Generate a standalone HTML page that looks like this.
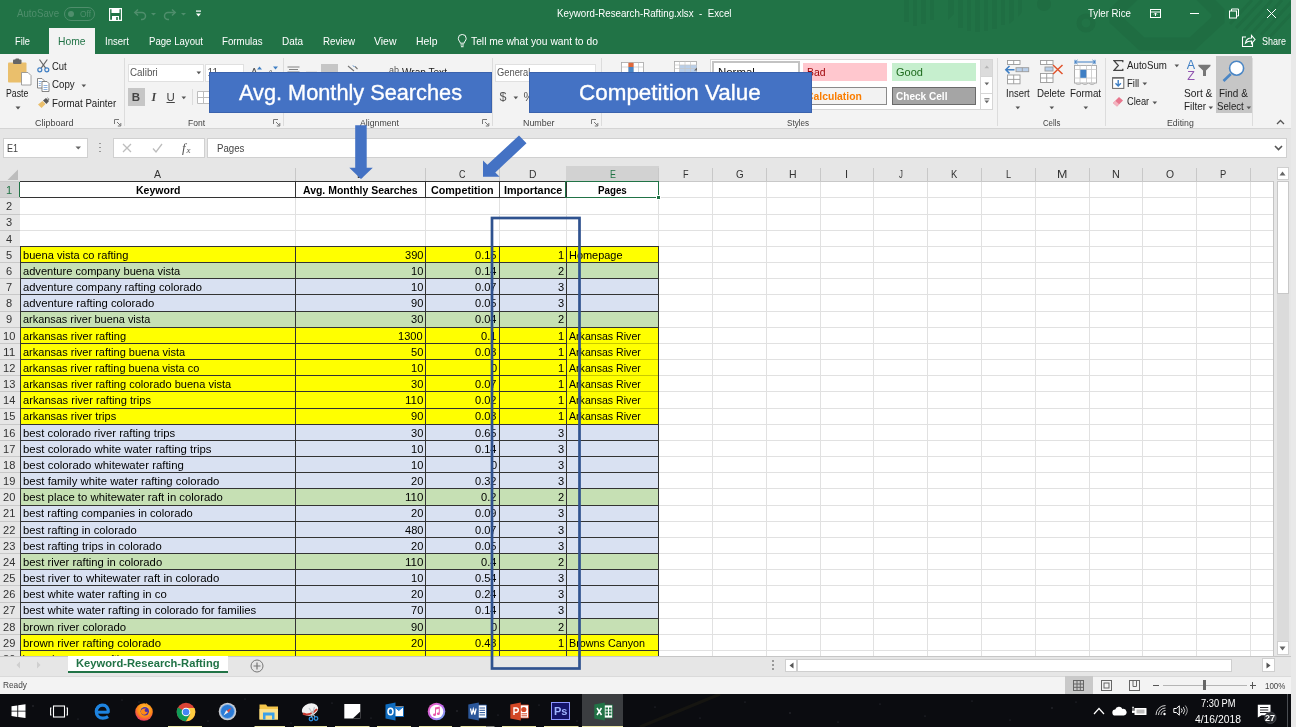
<!DOCTYPE html>
<html><head><meta charset="utf-8"><title>Excel</title>
<style>
*{box-sizing:border-box;margin:0;padding:0}
html,body{width:1296px;height:727px;overflow:hidden;background:#e9e9e9}
body{font-family:"Liberation Sans",sans-serif;font-size:11px;color:#222;position:relative}
#app div,#app span,#app svg{position:absolute}
#app{position:absolute;left:0;top:0;width:1291px;height:727px;background:#e6e6e6;filter:blur(0.4px)}
.t{white-space:nowrap;line-height:1}
</style></head><body><div id="app">

<div style="left:-6px;top:-6px;width:1297px;height:60px;background:#217346"></div>
<svg style="left:880px;top:0" width="411" height="54" viewBox="0 0 411 54">
<g fill="#1f6d42">
<path d="M24 0h5v22h-5zM33 0h4v26h-4zM41 0h5v24h-5zM50 0h4v20h-4zM68 0h6v14l-6 6zM78 0h5v28h-5zM87 0h4v31h-4zM95 0h5v32h-5zM104 0h4v31h-4zM112 0h5v29h-5zM121 0h4v25h-4zM129 0h5v20l-5 4zM138 0h4v12l-4 5z" opacity=".8"/>
<circle cx="164" cy="4" r="7"/>
</g>
<circle cx="206" cy="23" r="7" fill="none" stroke="#1f6d42" stroke-width="5"/>
<path d="M262 -14h50l26 26v8l-26 24h-50l-26-24v-8z" fill="none" stroke="#1f6d42" stroke-width="13" stroke-linejoin="miter"/>
<g stroke="#1f6d42" stroke-width="3" opacity=".9"><path d="M372 0l-22 24M382 0l-26 28M392 0l-28 31M402 0l-30 33M411 2l-30 33M411 14l-22 24"/></g>
</svg>
<div class="t" style="left:17px;top:9px;font-size:10.2px;color:#4f8e6c;transform:scaleX(0.9518);transform-origin:0 50%;">AutoSave</div>
<div style="left:64px;top:6.5px;width:31px;height:14px;border:1.3px solid #4f8e6c;border-radius:7px"></div>
<div style="left:68px;top:10.5px;width:6px;height:6px;border-radius:3px;background:#4f8e6c"></div>
<div class="t" style="left:79.6px;top:9px;font-size:9.6px;color:#4f8e6c;transform:scaleX(0.8711);transform-origin:0 50%;">Off</div>
<svg style="left:109px;top:8px" width="13" height="13" viewBox="0 0 13 13"><path d="M0.5 0.5h12v12h-12z" fill="none" stroke="#fff" stroke-width="1.3"/><rect x="2.5" y="1" width="8" height="4" fill="#fff"/><rect x="3" y="8" width="7" height="4.5" fill="#fff"/><rect x="7.2" y="9" width="1.6" height="3" fill="#217346"/></svg>
<svg style="left:133px;top:8px" width="60" height="13" viewBox="0 0 60 13"><g fill="none" stroke="#4f8e6c" stroke-width="1.5"><path d="M2 4.5h7a3.5 3.5 0 0 1 0 7h-1"/><path d="M5 1.5l-3.2 3 3.2 3"/><path d="M42 4.500h-7a3.5 3.5 0 0 0 0 7h1"/><path d="M39 1.500l3.200 3-3.200 3"/></g><path d="M18 5h5l-2.500 2.500z" fill="#4f8e6c"/><path d="M48 5h5l-2.500 2.500z" fill="#4f8e6c"/></svg>
<svg style="left:195px;top:10px" width="7" height="8" viewBox="0 0 7 8"><rect x="1" y="0.500" width="5" height="1.200" fill="#fff"/><path d="M1 3.500h5l-2.500 3z" fill="#fff"/></svg>
<div class="t" style="left:556.7px;top:9px;font-size:10.2px;color:#fff;transform:scaleX(0.9571);transform-origin:0 50%;">Keyword-Research-Rafting.xlsx &nbsp;-&nbsp; Excel</div>
<div class="t" style="left:1088px;top:9px;font-size:10.2px;color:#fff;transform:scaleX(0.9483);transform-origin:0 50%;">Tyler Rice</div>
<svg style="left:1150px;top:7px" width="130" height="14" viewBox="0 0 130 14"><g fill="none" stroke="#fff" stroke-width="1">
<rect x="0.500" y="2.500" width="10" height="8"/><path d="M0.500 5h10"/><path d="M5.500 9V6M4 7.500l1.500-1.500 1.500 1.500"/>
<path d="M40 6.500h9"/>
<rect x="79.500" y="4" width="7" height="7" /><path d="M81.500 4V2h7v7h-2"/>
<path d="M117 2l9 9M126 2l-9 9"/></g></svg>
<div style="left:49px;top:28px;width:46px;height:27px;background:#f3f3f3"></div>
<div class="t" style="left:15px;top:37px;font-size:10.2px;color:#fff;transform:scaleX(0.9126);transform-origin:0 50%;">File</div>
<div class="t" style="left:58.1px;top:37px;font-size:10.2px;color:#217346;transform:scaleX(1.0107);transform-origin:0 50%;">Home</div>
<div class="t" style="left:105.2px;top:37px;font-size:10.2px;color:#fff;transform:scaleX(0.9408);transform-origin:0 50%;">Insert</div>
<div class="t" style="left:148.7px;top:37px;font-size:10.2px;color:#fff;transform:scaleX(0.9445);transform-origin:0 50%;">Page Layout</div>
<div class="t" style="left:222.3px;top:37px;font-size:10.2px;color:#fff;transform:scaleX(0.9551);transform-origin:0 50%;">Formulas</div>
<div class="t" style="left:282.4px;top:37px;font-size:10.2px;color:#fff;transform:scaleX(0.9793);transform-origin:0 50%;">Data</div>
<div class="t" style="left:323px;top:37px;font-size:10.2px;color:#fff;transform:scaleX(0.9568);transform-origin:0 50%;">Review</div>
<div class="t" style="left:374px;top:37px;font-size:10.2px;color:#fff;transform:scaleX(1.0263);transform-origin:0 50%;">View</div>
<div class="t" style="left:415.5px;top:37px;font-size:10.2px;color:#fff;transform:scaleX(1.0249);transform-origin:0 50%;">Help</div>
<div class="t" style="left:471px;top:37px;font-size:10.2px;color:#fff;transform:scaleX(1.0090);transform-origin:0 50%;">Tell me what you want to do</div>
<div class="t" style="left:1262px;top:37px;font-size:10.2px;color:#fff;transform:scaleX(0.8818);transform-origin:0 50%;">Share</div>
<svg style="left:456.500px;top:33.500px" width="10.500" height="14" viewBox="0 0 12 16"><g fill="none" stroke="#fff" stroke-width="1.100"><path d="M3.800 10.500C3.800 8.500 1.500 7.800 1.500 5A4.500 4.500 0 0 1 10.500 5C10.500 7.800 8.200 8.500 8.200 10.500z"/><path d="M4 12.500h4M4.500 14.500h3"/></g></svg>
<svg style="left:1241px;top:33px" width="15" height="15" viewBox="0 0 15 15"><g fill="none" stroke="#fff" stroke-width="1.100"><path d="M5 4H1.500v9.500h10V10"/><path d="M4.500 10c.5-3 2.500-5 6-5V2.500l3.500 4-3.500 4V8c-2.500 0-4.500.5-6 2z"/></g></svg>
<div style="left:-6px;top:54px;width:1297px;height:75px;background:#f3f3f3;border-bottom:1px solid #d4d4d4"></div>
<div style="left:124px;top:58px;width:1px;height:68px;background:#dcdcdc"></div>
<div style="left:282.5px;top:58px;width:1px;height:68px;background:#dcdcdc"></div>
<div style="left:492px;top:58px;width:1px;height:68px;background:#dcdcdc"></div>
<div style="left:601px;top:58px;width:1px;height:68px;background:#dcdcdc"></div>
<div style="left:997px;top:58px;width:1px;height:68px;background:#dcdcdc"></div>
<div style="left:1104.5px;top:58px;width:1px;height:68px;background:#dcdcdc"></div>
<div style="left:1252px;top:58px;width:1px;height:68px;background:#dcdcdc"></div>
<div class="t" style="left:34.5px;top:118px;font-size:9.6px;color:#444;transform:scaleX(0.9369);transform-origin:0 50%;">Clipboard</div>
<div class="t" style="left:187.8px;top:118px;font-size:9.6px;color:#444;transform:scaleX(0.8850);transform-origin:0 50%;">Font</div>
<div class="t" style="left:360.4px;top:118px;font-size:9.6px;color:#444;transform:scaleX(0.9112);transform-origin:0 50%;">Alignment</div>
<div class="t" style="left:522.8px;top:118px;font-size:9.6px;color:#444;transform:scaleX(0.9255);transform-origin:0 50%;">Number</div>
<div class="t" style="left:787px;top:118px;font-size:9.6px;color:#444;transform:scaleX(0.8415);transform-origin:0 50%;">Styles</div>
<div class="t" style="left:1043px;top:118px;font-size:9.6px;color:#444;transform:scaleX(0.8108);transform-origin:0 50%;">Cells</div>
<div class="t" style="left:1167.3px;top:118px;font-size:9.6px;color:#444;transform:scaleX(0.9130);transform-origin:0 50%;">Editing</div>
<svg style="left:114px;top:119px" width="8" height="8" viewBox="0 0 8 8"><path d="M0.500 5V0.500H5" fill="none" stroke="#777" stroke-width="1"/><path d="M3 3l3.500 3.500M6.800 4v3H3.800" fill="none" stroke="#777" stroke-width="1"/></svg>
<svg style="left:272.5px;top:119px" width="8" height="8" viewBox="0 0 8 8"><path d="M0.500 5V0.500H5" fill="none" stroke="#777" stroke-width="1"/><path d="M3 3l3.500 3.500M6.800 4v3H3.800" fill="none" stroke="#777" stroke-width="1"/></svg>
<svg style="left:482px;top:119px" width="8" height="8" viewBox="0 0 8 8"><path d="M0.500 5V0.500H5" fill="none" stroke="#777" stroke-width="1"/><path d="M3 3l3.500 3.500M6.800 4v3H3.800" fill="none" stroke="#777" stroke-width="1"/></svg>
<svg style="left:591px;top:119px" width="8" height="8" viewBox="0 0 8 8"><path d="M0.500 5V0.500H5" fill="none" stroke="#777" stroke-width="1"/><path d="M3 3l3.500 3.500M6.800 4v3H3.800" fill="none" stroke="#777" stroke-width="1"/></svg>
<!-- Clipboard group -->
<svg style="left:5px;top:58px" width="30" height="30" viewBox="0 0 30 30">
<rect x="3" y="4.500" width="18.500" height="20" rx="1" fill="#eabf6c"/>
<rect x="8" y="1.500" width="8.500" height="4.500" rx="1" fill="#666"/><rect x="10.300" y="0.500" width="4" height="2.500" rx="1" fill="#666"/>
<path d="M16.500 14.500h6.500l3 3v9.500h-9.500z" fill="#fff" stroke="#8a8a8a" stroke-width="0.800"/>
</svg>
<div class="t rl" style="left:6.3px;top:89px;font-size:10.2px;transform:scaleX(0.8588);transform-origin:0 50%;">Paste</div>
<svg style="left:14.500px;top:106px" width="6" height="4" viewBox="0 0 6 4"><path d="M0.500 0.500h5l-2.500 3z" fill="#555"/></svg>
<!-- cut -->
<svg style="left:36.500px;top:59px" width="13" height="14" viewBox="0 0 13 14"><g fill="none" stroke-width="1.200"><path d="M2.500 0.500L8.800 9.300M10.300 0.500L4 9.300" stroke="#666"/><circle cx="2.800" cy="10.800" r="2" stroke="#3f7fc4"/><circle cx="9.800" cy="10.800" r="2" stroke="#3f7fc4"/></g></svg>
<div class="t rl" style="left:52px;top:62px;font-size:10.2px;transform:scaleX(0.9261);transform-origin:0 50%;">Cut</div>
<!-- copy -->
<svg style="left:36.500px;top:77.500px" width="13" height="14" viewBox="0 0 13 14"><g fill="#fff" stroke="#777" stroke-width="0.900"><path d="M0.500 0.500h4.500l2 2v7.500h-6.500z"/><path d="M5 3.500h5l2 2v8h-7z"/></g><path d="M1.800 3.500h3M1.800 5.500h2M1.800 7.500h2M6.500 7.500h4M6.500 9.500h4M6.500 11.500h4" stroke="#5b8fd0" stroke-width="0.700"/></svg>
<div class="t rl" style="left:52px;top:80px;font-size:10.2px;transform:scaleX(0.9533);transform-origin:0 50%;">Copy</div>
<svg style="left:81px;top:83.500px" width="6" height="4" viewBox="0 0 6 4"><path d="M0.500 0.500h4.600l-2.300 2.800z" fill="#555"/></svg>
<!-- format painter -->
<svg style="left:36.500px;top:96.500px" width="13" height="12" viewBox="0 0 13 12"><path d="M1 7.500L5.500 4l3 3L4.500 11z" fill="#eabf6c"/><path d="M6 3.500L9 1l3 3-2.500 3z" fill="#555"/><path d="M10.500 0.500l.5 1.200 1.200.5-1.200.5-.5 1.200" fill="none" stroke="#555" stroke-width="0.600"/></svg>
<div class="t rl" style="left:52px;top:99px;font-size:10.2px;transform:scaleX(0.9517);transform-origin:0 50%;">Format Painter</div>

<!-- Font group -->
<div style="left:127.500px;top:63.500px;width:76px;height:18px;background:#fff;border:1px solid #e0e0e0"></div>
<div class="t rl" style="left:129.7px;top:68px;font-size:10.2px;color:#555;transform:scaleX(0.9617);transform-origin:0 50%;">Calibri</div>
<svg style="left:195.500px;top:71px" width="6" height="4" viewBox="0 0 6 4"><path d="M0.500 0.500h4.600l-2.300 2.800z" fill="#555"/></svg>
<div style="left:204.700px;top:63.500px;width:39.500px;height:18px;background:#fff;border:1px solid #e0e0e0"></div>
<div class="t rl" style="left:207.500px;top:68px;font-size:10.2px;color:#555;">11</div>
<div class="t" style="left:250.500px;top:67px;font-size:11px;color:#555">A</div>
<svg style="left:257px;top:65.500px" width="5" height="4" viewBox="0 0 5 4"><path d="M0 3.500L2.500 0.500L5 3.500z" fill="#3f7fc4"/></svg>
<div class="t" style="left:267.500px;top:67.500px;font-size:9.500px;color:#555">A</div>
<svg style="left:273px;top:65.500px" width="5" height="4" viewBox="0 0 5 4"><path d="M0 0.500L2.500 3.500L5 0.500z" fill="#3f7fc4"/></svg>
<div style="left:127.500px;top:88.200px;width:17.200px;height:18px;background:#c6c6c6"></div>
<div class="t" style="left:131.800px;top:92px;font-size:11.500px;font-weight:bold;color:#444;">B</div>
<div class="t" style="left:151.500px;top:91px;font-size:12px;font-style:italic;font-family:'Liberation Serif',serif;font-weight:bold;color:#444;">I</div>
<div class="t" style="left:166.500px;top:92px;font-size:11.500px;color:#444;text-decoration:underline;">U</div>
<svg style="left:181px;top:95.500px" width="6" height="4" viewBox="0 0 6 4"><path d="M0.500 0.500h4.600l-2.300 2.800z" fill="#555"/></svg>
<div style="left:191.500px;top:89px;width:1px;height:16px;background:#dcdcdc"></div>
<svg style="left:197px;top:91px" width="13" height="13" viewBox="0 0 13 13"><path d="M0.500 0.500h12v12h-12zM6.500 0.500v12M0.500 6.500h12" fill="#fff" stroke="#bdbdbd" stroke-width="1"/></svg>

<!-- Alignment group (mostly hidden) -->
<svg style="left:287px;top:65.500px" width="32" height="8" viewBox="0 0 32 8"><path d="M0.500 1h12M2 3.500h9M0.500 6h12" stroke="#777" stroke-width="0.900"/><path d="M19 6.500h11" stroke="#aaa" stroke-width="1.500"/></svg>
<div style="left:320.800px;top:63.500px;width:17.200px;height:8px;background:#c6c6c6"></div>
<svg style="left:347px;top:65px" width="12" height="7" viewBox="0 0 12 7"><path d="M1 1l6 5M8 1.500l2.500 2.500" stroke="#777" stroke-width="1.100" fill="none"/><path d="M6 0.500l1.500 1.500" stroke="#3f7fc4" stroke-width="1"/></svg>
<div class="t" style="left:389px;top:66px;font-size:9px;color:#555">ab</div>
<div class="t rl" style="left:402px;top:68px;font-size:10.2px;transform:scaleX(0.9881);transform-origin:0 50%;">Wrap Text</div>

<!-- Number group -->
<div style="left:494.700px;top:63.500px;width:101.500px;height:18px;background:#fff;border:1px solid #e0e0e0"></div>
<div class="t rl" style="left:496.7px;top:68px;font-size:10.2px;color:#555;transform:scaleX(0.9177);transform-origin:0 50%;">General</div>
<div class="t" style="left:499.500px;top:91px;font-size:12.500px;color:#555;">$</div>
<svg style="left:513px;top:95.500px" width="6" height="4" viewBox="0 0 6 4"><path d="M0.500 0.500h4.600l-2.300 2.800z" fill="#555"/></svg>
<div class="t" style="left:523.500px;top:91px;font-size:12px;color:#555;">%</div>

<!-- Styles group -->
<svg style="left:621px;top:61.500px" width="24" height="10" viewBox="0 0 24 10"><rect x="0.500" y="0.500" width="22" height="10" fill="#fff" stroke="#a6a6a6" stroke-width="0.800"/><path d="M7.500 0.500v10M12.500 0.500v10M17.500 0.500v10M0.500 5h22" stroke="#c6c6c6" stroke-width="0.700"/><rect x="7.500" y="0.800" width="5" height="4.200" fill="#e0683a"/><rect x="7.500" y="5" width="5" height="5" fill="#4a86c5"/></svg>
<svg style="left:674px;top:61px" width="24" height="11" viewBox="0 0 24 11"><rect x="0.500" y="0.500" width="22" height="11" fill="#fff" stroke="#a6a6a6" stroke-width="0.800"/><rect x="5.500" y="4" width="17" height="7" fill="#b9cfea"/><path d="M5.500 0.500v11M11 0.500v11M16.500 0.500v11M0.500 4h22M0.500 7.500h22" stroke="#c6c6c6" stroke-width="0.700"/><path d="M20 9.500l3-3v3z" fill="#666"/></svg>
<div style="left:710px;top:59px;width:271px;height:51px;background:#fff;border:1px solid #d6d6d6"></div>
<div style="left:711.500px;top:60.500px;width:88.500px;height:22px;background:#fff;border:2px solid #c3c3c3"></div>
<div class="t" style="left:717.5px;top:67px;font-size:10.9px;color:#111;transform:scaleX(1.0476);transform-origin:0 50%;">Normal</div>
<div style="left:803px;top:63.200px;width:83.700px;height:17.500px;background:#ffc7ce"></div>
<div class="t" style="left:806.5px;top:67px;font-size:10.9px;color:#9c0006;transform:scaleX(0.9539);transform-origin:0 50%;">Bad</div>
<div style="left:892px;top:63.200px;width:84.300px;height:17.500px;background:#c6efce"></div>
<div class="t" style="left:895.6px;top:67px;font-size:10.9px;color:#1e6b1e;transform:scaleX(1.0088);transform-origin:0 50%;">Good</div>
<div style="left:803px;top:87.300px;width:83.700px;height:18px;background:#f2f2f2;border:1px solid #8a8a8a"></div>
<div class="t" style="left:806.3px;top:91px;font-size:10.9px;font-weight:bold;color:#fa7d00;transform:scaleX(0.9515);transform-origin:0 50%;">Calculation</div>
<div style="left:892px;top:87.300px;width:84.300px;height:18px;background:#a5a5a5;border:1.600px solid #6a6a6a"></div>
<div class="t" style="left:895.8px;top:91px;font-size:10.9px;font-weight:bold;color:#fff;transform:scaleX(0.9240);transform-origin:0 50%;">Check Cell</div>
<div style="left:981px;top:59px;width:11.500px;height:51px;background:#fff;border:1px solid #d6d6d6;border-left:none"></div>
<div style="left:981px;top:59.500px;width:11px;height:16px;background:#dcdcdc"></div>
<svg style="left:983.500px;top:65px" width="6" height="4" viewBox="0 0 6 4"><path d="M0.500 3.300h4.600l-2.300-2.800z" fill="#b5b5b5"/></svg>
<div style="left:981px;top:75.500px;width:11.500px;height:1px;background:#d6d6d6"></div>
<svg style="left:983.500px;top:82px" width="6" height="4" viewBox="0 0 6 4"><path d="M0.500 0.500h4.600l-2.300 2.800z" fill="#666"/></svg>
<div style="left:981px;top:92.500px;width:11.500px;height:1px;background:#d6d6d6"></div>
<svg style="left:983.500px;top:97.500px" width="6" height="6" viewBox="0 0 6 6"><path d="M0.300 0.800h5.200" stroke="#666" stroke-width="1"/><path d="M0.500 2.500h4.600l-2.300 2.800z" fill="#666"/></svg>

<!-- Cells group -->
<svg style="left:1004px;top:59px" width="27" height="26" viewBox="0 0 27 26">
<g fill="#fff" stroke="#9a9a9a" stroke-width="0.900"><rect x="3.500" y="1.500" width="12.500" height="4"/><path d="M9.700 1.500v4"/><rect x="3.500" y="16" width="12.500" height="8.800"/><path d="M9.700 16v8.800M3.500 20.400h12.500"/></g>
<rect x="12" y="8.700" width="12.700" height="4" fill="#b9cfea" stroke="#9a9a9a" stroke-width="0.900"/><path d="M18.300 8.700v4" stroke="#9a9a9a" stroke-width="0.900"/>
<path d="M10.500 10.700H2M5.500 7l-3.700 3.700 3.700 3.700" fill="none" stroke="#3f7fc4" stroke-width="1.500"/></svg>
<div class="t rl" style="left:1005.8px;top:89px;font-size:10.2px;transform:scaleX(0.9290);transform-origin:0 50%;">Insert</div>
<svg style="left:1014.700px;top:105.500px" width="6" height="4" viewBox="0 0 6 4"><path d="M0.500 0.500h4.600l-2.300 2.800z" fill="#555"/></svg>
<svg style="left:1039px;top:59px" width="27" height="26" viewBox="0 0 27 26">
<g fill="#fff" stroke="#9a9a9a" stroke-width="0.900"><rect x="1.500" y="1.500" width="12.500" height="4"/><path d="M7.700 1.500v4"/><rect x="1.500" y="14.500" width="12.500" height="9"/><path d="M7.700 14.500v9M1.500 19h12.500"/></g>
<rect x="6" y="8" width="8" height="4" fill="#b9cfea" stroke="#9a9a9a" stroke-width="0.900"/>
<path d="M14 6l9.500 9M23.500 6l-9.500 9" fill="none" stroke="#e0532c" stroke-width="1.500"/></svg>
<div class="t rl" style="left:1037.2px;top:89px;font-size:10.2px;transform:scaleX(0.9530);transform-origin:0 50%;">Delete</div>
<svg style="left:1048.500px;top:105.500px" width="6" height="4" viewBox="0 0 6 4"><path d="M0.500 0.500h4.600l-2.300 2.800z" fill="#555"/></svg>
<svg style="left:1073px;top:58.500px" width="26" height="27" viewBox="0 0 26 27">
<path d="M2 3h20M2 0.800v4.400M22 0.800v4.400M4.500 1l-2.300 2 2.300 2M19.500 1l2.300 2-2.300 2" fill="none" stroke="#3f7fc4" stroke-width="1"/>
<rect x="1.500" y="6.500" width="22" height="17.500" fill="#fff" stroke="#a6a6a6" stroke-width="0.900"/>
<path d="M7 6.500v17.500M13.500 6.500v17.500M18.500 6.500v17.500M1.500 10.500h22M1.500 19h22" stroke="#c6c6c6" stroke-width="0.800"/>
<rect x="7.300" y="10.800" width="6" height="8" fill="#3f7fc4"/>
<path d="M2.500 24c1 2 5 2 6 0M9 24c1 2 5 2 6 0M16 24c1 2 5 2 6 0" fill="none" stroke="#a6a6a6" stroke-width="0.800"/></svg>
<div class="t rl" style="left:1069.7px;top:89px;font-size:10.2px;transform:scaleX(0.9627);transform-origin:0 50%;">Format</div>
<svg style="left:1082.500px;top:105.500px" width="6" height="4" viewBox="0 0 6 4"><path d="M0.500 0.500h4.600l-2.300 2.800z" fill="#555"/></svg>

<!-- Editing group -->
<svg style="left:1112.500px;top:59.500px" width="11" height="11" viewBox="0 0 11 11"><path d="M9.800 2.200V0.700H1l4.300 4.800L1 10.300h8.800V8.800" fill="none" stroke="#444" stroke-width="1.300"/></svg>
<div class="t rl" style="left:1127px;top:61px;font-size:10.2px;transform:scaleX(0.9534);transform-origin:0 50%;">AutoSum</div>
<svg style="left:1173.500px;top:64px" width="6" height="4" viewBox="0 0 6 4"><path d="M0.500 0.500h4.600l-2.300 2.800z" fill="#555"/></svg>
<svg style="left:1111.500px;top:77px" width="13" height="12" viewBox="0 0 13 12"><rect x="0.600" y="0.600" width="11.200" height="10.800" fill="#fff" stroke="#666" stroke-width="1"/><path d="M0.600 1h11.200" stroke="#666" stroke-width="1.400"/><path d="M6.200 3v6M3.500 6.300l2.700 2.700 2.700-2.700" fill="none" stroke="#3f7fc4" stroke-width="1.400"/></svg>
<div class="t rl" style="left:1127px;top:79px;font-size:10.2px;transform:scaleX(0.9364);transform-origin:0 50%;">Fill</div>
<svg style="left:1141.500px;top:82px" width="6" height="4" viewBox="0 0 6 4"><path d="M0.500 0.500h4.600l-2.300 2.800z" fill="#555"/></svg>
<svg style="left:1112px;top:96px" width="12" height="11" viewBox="0 0 12 11"><path d="M1 7l6-6 4 3.500-6 6z" fill="#e8768d"/><path d="M1 7l2.200-2.200 4 3.500L5 10.500z" fill="#f3b4c0"/></svg>
<div class="t rl" style="left:1127px;top:97px;font-size:10.2px;transform:scaleX(0.9108);transform-origin:0 50%;">Clear</div>
<svg style="left:1151.500px;top:100.500px" width="6" height="4" viewBox="0 0 6 4"><path d="M0.500 0.500h4.600l-2.300 2.800z" fill="#555"/></svg>
<div class="t" style="left:1186.800px;top:59px;font-size:12.500px;color:#3f7fc4">A</div>
<div class="t" style="left:1187.300px;top:70px;font-size:12.500px;color:#9055b0">Z</div>
<svg style="left:1198px;top:64px" width="13" height="13" viewBox="0 0 13 13"><path d="M0.300 0.800h12.200v1.200L8 6.500v5.500H5V6.500L0.300 2z" fill="#777"/></svg>
<div class="t rl" style="left:1184.1px;top:89px;font-size:10.2px;transform:scaleX(1.0020);transform-origin:0 50%;">Sort &amp;</div>
<div class="t rl" style="left:1184.1px;top:102px;font-size:10.2px;transform:scaleX(0.9750);transform-origin:0 50%;">Filter</div>
<svg style="left:1208.300px;top:105.500px" width="6" height="4" viewBox="0 0 6 4"><path d="M0.500 0.500h4.600l-2.300 2.800z" fill="#555"/></svg>
<div style="left:1215.800px;top:56.300px;width:36.700px;height:56.500px;background:#c6c6c6"></div>
<svg style="left:1220px;top:58px" width="28" height="26" viewBox="0 0 28 26"><circle cx="16.600" cy="10.200" r="7" fill="#fff" stroke="#4a86c5" stroke-width="1.600"/><path d="M10.800 16L3.500 23" stroke="#4a86c5" stroke-width="2.600" stroke-linecap="butt"/></svg>
<div class="t rl" style="left:1219.3px;top:89px;font-size:10.2px;transform:scaleX(0.9769);transform-origin:0 50%;">Find &amp;</div>
<div class="t rl" style="left:1217.2px;top:102px;font-size:10.2px;transform:scaleX(0.9454);transform-origin:0 50%;">Select</div>
<svg style="left:1246px;top:105.500px" width="6" height="4" viewBox="0 0 6 4"><path d="M0.500 0.500h4.600l-2.300 2.800z" fill="#555"/></svg>
<svg style="left:1276px;top:118.500px" width="9" height="6" viewBox="0 0 9 6"><path d="M1 5l3.500-3.500L8 5" fill="none" stroke="#555" stroke-width="1.300"/></svg>

<div style="left:-6px;top:129px;width:1297px;height:37px;background:#e6e6e6"></div>
<div style="left:2.500px;top:137.500px;width:85px;height:20px;background:#fff;border:1px solid #d0d0d0"></div>
<div class="t" style="left:7px;top:144px;font-size:10.2px;color:#444;transform:scaleX(0.8817);transform-origin:0 50%;">E1</div>
<svg style="left:75px;top:146px" width="7" height="4" viewBox="0 0 7 4"><path d="M0.500 0.500h5.500l-2.750 3z" fill="#666"/></svg>
<div style="left:99px;top:142.5px;width:1.500px;height:1.500px;background:#999"></div>
<div style="left:99px;top:146.5px;width:1.500px;height:1.500px;background:#999"></div>
<div style="left:99px;top:150.5px;width:1.500px;height:1.500px;background:#999"></div>
<div style="left:112.500px;top:137.500px;width:92px;height:20px;background:#fff;border:1px solid #d0d0d0"></div>
<svg style="left:120px;top:141px" width="80" height="14" viewBox="0 0 80 14"><g fill="none" stroke="#bdbdbd" stroke-width="1.300"><path d="M3 3l8 8M11 3l-8 8"/><path d="M33 7.500l3 3.500 6-8"/></g><text x="62" y="11" font-family="Liberation Serif" font-style="italic" font-size="13" fill="#555">f</text><text x="66.500" y="11.500" font-family="Liberation Serif" font-style="italic" font-size="9" fill="#555">x</text></svg>
<div style="left:207px;top:137.500px;width:1080px;height:20px;background:#fff;border:1px solid #d0d0d0"></div>
<div class="t" style="left:216.6px;top:144px;font-size:10.2px;color:#444;transform:scaleX(0.9508);transform-origin:0 50%;">Pages</div>
<svg style="left:1274px;top:145px" width="9" height="6" viewBox="0 0 9 6"><path d="M1 1l3.500 3.500L8 1" fill="none" stroke="#555" stroke-width="1.600"/></svg>
<div style="left:-6px;top:166px;width:1297px;height:490px;background:#e6e6e6"></div>
<div style="left:20px;top:181.7px;width:1253px;height:474.3px;background:#fff"></div>
<svg style="left:7px;top:169px" width="12" height="12" viewBox="0 0 12 12"><path d="M11 0.500V11H0.500z" fill="#bdbdbd"/></svg>
<div class="t" style="left:154.23px;top:169px;font-size:10.9px;color:#333;transform:scaleX(0.9670);transform-origin:0 50%;">A</div>
<div style="left:295.0px;top:168px;width:1px;height:13.600px;background:#c8c8c8"></div>
<div class="t" style="left:357.30px;top:169px;font-size:10.9px;color:#333;transform:scaleX(0.9090);transform-origin:0 50%;">B</div>
<div style="left:425.2px;top:168px;width:1px;height:13.600px;background:#c8c8c8"></div>
<div class="t" style="left:459.31px;top:169px;font-size:10.9px;color:#333;transform:scaleX(0.8230);transform-origin:0 50%;">C</div>
<div style="left:498.9px;top:168px;width:1px;height:13.600px;background:#c8c8c8"></div>
<div class="t" style="left:529.16px;top:169px;font-size:10.9px;color:#333;transform:scaleX(0.9496);transform-origin:0 50%;">D</div>
<div style="left:565.9px;top:168px;width:1px;height:13.600px;background:#c8c8c8"></div>
<div style="left:566.4px;top:166px;width:92.30000000000007px;height:15.600px;background:#d2d2d2;border-bottom:1.500px solid #217346"></div>
<div class="t" style="left:609.58px;top:169px;font-size:10.9px;color:#217346;transform:scaleX(0.8160);transform-origin:0 50%;">E</div>
<div style="left:658.2px;top:168px;width:1px;height:13.600px;background:#c8c8c8"></div>
<div class="t" style="left:682.81px;top:169px;font-size:10.9px;color:#333;transform:scaleX(0.8384);transform-origin:0 50%;">F</div>
<div style="left:712.0px;top:168px;width:1px;height:13.600px;background:#c8c8c8"></div>
<div class="t" style="left:735.57px;top:169px;font-size:10.9px;color:#333;transform:scaleX(0.9041);transform-origin:0 50%;">G</div>
<div style="left:765.8px;top:168px;width:1px;height:13.600px;background:#c8c8c8"></div>
<div class="t" style="left:789.41px;top:169px;font-size:10.9px;color:#333;transform:scaleX(0.9617);transform-origin:0 50%;">H</div>
<div style="left:819.5999999999999px;top:168px;width:1px;height:13.600px;background:#c8c8c8"></div>
<div class="t" style="left:845.47px;top:169px;font-size:10.9px;color:#333;transform:scaleX(1.0109);transform-origin:0 50%;">I</div>
<div style="left:873.3999999999999px;top:168px;width:1px;height:13.600px;background:#c8c8c8"></div>
<div class="t" style="left:898.86px;top:169px;font-size:10.9px;color:#333;transform:scaleX(0.7108);transform-origin:0 50%;">J</div>
<div style="left:927.1999999999998px;top:168px;width:1px;height:13.600px;background:#c8c8c8"></div>
<div class="t" style="left:951.44px;top:169px;font-size:10.9px;color:#333;transform:scaleX(0.8682);transform-origin:0 50%;">K</div>
<div style="left:980.9999999999998px;top:168px;width:1px;height:13.600px;background:#c8c8c8"></div>
<div class="t" style="left:1005.85px;top:169px;font-size:10.9px;color:#333;transform:scaleX(0.8426);transform-origin:0 50%;">L</div>
<div style="left:1034.7999999999997px;top:168px;width:1px;height:13.600px;background:#c8c8c8"></div>
<div class="t" style="left:1057.01px;top:169px;font-size:10.9px;color:#333;transform:scaleX(1.1441);transform-origin:0 50%;">M</div>
<div style="left:1088.5999999999997px;top:168px;width:1px;height:13.600px;background:#c8c8c8"></div>
<div class="t" style="left:1112.08px;top:169px;font-size:10.9px;color:#333;transform:scaleX(0.9964);transform-origin:0 50%;">N</div>
<div style="left:1142.3999999999996px;top:168px;width:1px;height:13.600px;background:#c8c8c8"></div>
<div class="t" style="left:1165.78px;top:169px;font-size:10.9px;color:#333;transform:scaleX(0.9488);transform-origin:0 50%;">O</div>
<div style="left:1196.1999999999996px;top:168px;width:1px;height:13.600px;background:#c8c8c8"></div>
<div class="t" style="left:1220.46px;top:169px;font-size:10.9px;color:#333;transform:scaleX(0.8633);transform-origin:0 50%;">P</div>
<div style="left:1249.9999999999995px;top:168px;width:1px;height:13.600px;background:#c8c8c8"></div>
<div style="left:0;top:181.1px;width:1273px;height:1px;background:#c8c8c8"></div>
<div style="left:0;top:181.7px;width:20px;height:16.17px;background:#d2d2d2;border-right:1.500px solid #217346"></div>
<div class="t" style="left:6.42px;top:185px;font-size:10.9px;color:#217346;transform:scaleX(1.0158);transform-origin:0 50%;">1</div>
<div style="left:0;top:197.37px;width:20px;height:1px;background:#c8c8c8"></div>
<div class="t" style="left:6.42px;top:201px;font-size:10.9px;color:#333;transform:scaleX(1.0158);transform-origin:0 50%;">2</div>
<div style="left:0;top:213.54000000000002px;width:20px;height:1px;background:#c8c8c8"></div>
<div class="t" style="left:6.42px;top:217px;font-size:10.9px;color:#333;transform:scaleX(1.0158);transform-origin:0 50%;">3</div>
<div style="left:0;top:229.70999999999998px;width:20px;height:1px;background:#c8c8c8"></div>
<div class="t" style="left:6.42px;top:234px;font-size:10.9px;color:#333;transform:scaleX(1.0158);transform-origin:0 50%;">4</div>
<div style="left:0;top:245.88px;width:20px;height:1px;background:#c8c8c8"></div>
<div class="t" style="left:6.42px;top:250px;font-size:10.9px;color:#333;transform:scaleX(1.0158);transform-origin:0 50%;">5</div>
<div style="left:0;top:262.05px;width:20px;height:1px;background:#c8c8c8"></div>
<div class="t" style="left:6.42px;top:266px;font-size:10.9px;color:#333;transform:scaleX(1.0158);transform-origin:0 50%;">6</div>
<div style="left:0;top:278.22px;width:20px;height:1px;background:#c8c8c8"></div>
<div class="t" style="left:6.42px;top:282px;font-size:10.9px;color:#333;transform:scaleX(1.0158);transform-origin:0 50%;">7</div>
<div style="left:0;top:294.39000000000004px;width:20px;height:1px;background:#c8c8c8"></div>
<div class="t" style="left:6.42px;top:298px;font-size:10.9px;color:#333;transform:scaleX(1.0158);transform-origin:0 50%;">8</div>
<div style="left:0;top:310.56px;width:20px;height:1px;background:#c8c8c8"></div>
<div class="t" style="left:6.42px;top:314px;font-size:10.9px;color:#333;transform:scaleX(1.0158);transform-origin:0 50%;">9</div>
<div style="left:0;top:326.73px;width:20px;height:1px;background:#c8c8c8"></div>
<div class="t" style="left:3.34px;top:331px;font-size:10.9px;color:#333;transform:scaleX(1.0158);transform-origin:0 50%;">10</div>
<div style="left:0;top:342.90000000000003px;width:20px;height:1px;background:#c8c8c8"></div>
<div class="t" style="left:3.34px;top:347px;font-size:10.9px;color:#333;transform:scaleX(1.0885);transform-origin:0 50%;">11</div>
<div style="left:0;top:359.07px;width:20px;height:1px;background:#c8c8c8"></div>
<div class="t" style="left:3.34px;top:363px;font-size:10.9px;color:#333;transform:scaleX(1.0158);transform-origin:0 50%;">12</div>
<div style="left:0;top:375.24px;width:20px;height:1px;background:#c8c8c8"></div>
<div class="t" style="left:3.34px;top:379px;font-size:10.9px;color:#333;transform:scaleX(1.0158);transform-origin:0 50%;">13</div>
<div style="left:0;top:391.41px;width:20px;height:1px;background:#c8c8c8"></div>
<div class="t" style="left:3.34px;top:395px;font-size:10.9px;color:#333;transform:scaleX(1.0158);transform-origin:0 50%;">14</div>
<div style="left:0;top:407.58000000000004px;width:20px;height:1px;background:#c8c8c8"></div>
<div class="t" style="left:3.34px;top:411px;font-size:10.9px;color:#333;transform:scaleX(1.0158);transform-origin:0 50%;">15</div>
<div style="left:0;top:423.75000000000006px;width:20px;height:1px;background:#c8c8c8"></div>
<div class="t" style="left:3.34px;top:428px;font-size:10.9px;color:#333;transform:scaleX(1.0158);transform-origin:0 50%;">16</div>
<div style="left:0;top:439.92px;width:20px;height:1px;background:#c8c8c8"></div>
<div class="t" style="left:3.34px;top:444px;font-size:10.9px;color:#333;transform:scaleX(1.0158);transform-origin:0 50%;">17</div>
<div style="left:0;top:456.09000000000003px;width:20px;height:1px;background:#c8c8c8"></div>
<div class="t" style="left:3.34px;top:460px;font-size:10.9px;color:#333;transform:scaleX(1.0158);transform-origin:0 50%;">18</div>
<div style="left:0;top:472.26000000000005px;width:20px;height:1px;background:#c8c8c8"></div>
<div class="t" style="left:3.34px;top:476px;font-size:10.9px;color:#333;transform:scaleX(1.0158);transform-origin:0 50%;">19</div>
<div style="left:0;top:488.43000000000006px;width:20px;height:1px;background:#c8c8c8"></div>
<div class="t" style="left:3.34px;top:492px;font-size:10.9px;color:#333;transform:scaleX(1.0158);transform-origin:0 50%;">20</div>
<div style="left:0;top:504.6px;width:20px;height:1px;background:#c8c8c8"></div>
<div class="t" style="left:3.34px;top:508px;font-size:10.9px;color:#333;transform:scaleX(1.0158);transform-origin:0 50%;">21</div>
<div style="left:0;top:520.77px;width:20px;height:1px;background:#c8c8c8"></div>
<div class="t" style="left:3.34px;top:525px;font-size:10.9px;color:#333;transform:scaleX(1.0158);transform-origin:0 50%;">22</div>
<div style="left:0;top:536.9399999999999px;width:20px;height:1px;background:#c8c8c8"></div>
<div class="t" style="left:3.34px;top:541px;font-size:10.9px;color:#333;transform:scaleX(1.0158);transform-origin:0 50%;">23</div>
<div style="left:0;top:553.11px;width:20px;height:1px;background:#c8c8c8"></div>
<div class="t" style="left:3.34px;top:557px;font-size:10.9px;color:#333;transform:scaleX(1.0158);transform-origin:0 50%;">24</div>
<div style="left:0;top:569.28px;width:20px;height:1px;background:#c8c8c8"></div>
<div class="t" style="left:3.34px;top:573px;font-size:10.9px;color:#333;transform:scaleX(1.0158);transform-origin:0 50%;">25</div>
<div style="left:0;top:585.4499999999999px;width:20px;height:1px;background:#c8c8c8"></div>
<div class="t" style="left:3.34px;top:589px;font-size:10.9px;color:#333;transform:scaleX(1.0158);transform-origin:0 50%;">26</div>
<div style="left:0;top:601.62px;width:20px;height:1px;background:#c8c8c8"></div>
<div class="t" style="left:3.34px;top:605px;font-size:10.9px;color:#333;transform:scaleX(1.0158);transform-origin:0 50%;">27</div>
<div style="left:0;top:617.7900000000001px;width:20px;height:1px;background:#c8c8c8"></div>
<div class="t" style="left:3.34px;top:622px;font-size:10.9px;color:#333;transform:scaleX(1.0158);transform-origin:0 50%;">28</div>
<div style="left:0;top:633.9599999999999px;width:20px;height:1px;background:#c8c8c8"></div>
<div class="t" style="left:3.34px;top:638px;font-size:10.9px;color:#333;transform:scaleX(1.0158);transform-origin:0 50%;">29</div>
<div style="left:0;top:650.13px;width:20px;height:1px;background:#c8c8c8"></div>
<div class="t" style="left:3.34px;top:654px;font-size:10.9px;color:#333;transform:scaleX(1.0158);transform-origin:0 50%;">30</div>
<div style="left:0;top:666.3000000000001px;width:20px;height:1px;background:#c8c8c8"></div>
<div style="left:20px;top:197.37px;width:1253px;height:1px;background:#e1e1e1"></div>
<div style="left:20px;top:213.54000000000002px;width:1253px;height:1px;background:#e1e1e1"></div>
<div style="left:20px;top:229.70999999999998px;width:1253px;height:1px;background:#e1e1e1"></div>
<div style="left:20px;top:245.88px;width:1253px;height:1px;background:#e1e1e1"></div>
<div style="left:20px;top:262.05px;width:1253px;height:1px;background:#e1e1e1"></div>
<div style="left:20px;top:278.22px;width:1253px;height:1px;background:#e1e1e1"></div>
<div style="left:20px;top:294.39000000000004px;width:1253px;height:1px;background:#e1e1e1"></div>
<div style="left:20px;top:310.56px;width:1253px;height:1px;background:#e1e1e1"></div>
<div style="left:20px;top:326.73px;width:1253px;height:1px;background:#e1e1e1"></div>
<div style="left:20px;top:342.90000000000003px;width:1253px;height:1px;background:#e1e1e1"></div>
<div style="left:20px;top:359.07px;width:1253px;height:1px;background:#e1e1e1"></div>
<div style="left:20px;top:375.24px;width:1253px;height:1px;background:#e1e1e1"></div>
<div style="left:20px;top:391.41px;width:1253px;height:1px;background:#e1e1e1"></div>
<div style="left:20px;top:407.58000000000004px;width:1253px;height:1px;background:#e1e1e1"></div>
<div style="left:20px;top:423.75000000000006px;width:1253px;height:1px;background:#e1e1e1"></div>
<div style="left:20px;top:439.92px;width:1253px;height:1px;background:#e1e1e1"></div>
<div style="left:20px;top:456.09000000000003px;width:1253px;height:1px;background:#e1e1e1"></div>
<div style="left:20px;top:472.26000000000005px;width:1253px;height:1px;background:#e1e1e1"></div>
<div style="left:20px;top:488.43000000000006px;width:1253px;height:1px;background:#e1e1e1"></div>
<div style="left:20px;top:504.6px;width:1253px;height:1px;background:#e1e1e1"></div>
<div style="left:20px;top:520.77px;width:1253px;height:1px;background:#e1e1e1"></div>
<div style="left:20px;top:536.9399999999999px;width:1253px;height:1px;background:#e1e1e1"></div>
<div style="left:20px;top:553.11px;width:1253px;height:1px;background:#e1e1e1"></div>
<div style="left:20px;top:569.28px;width:1253px;height:1px;background:#e1e1e1"></div>
<div style="left:20px;top:585.4499999999999px;width:1253px;height:1px;background:#e1e1e1"></div>
<div style="left:20px;top:601.62px;width:1253px;height:1px;background:#e1e1e1"></div>
<div style="left:20px;top:617.7900000000001px;width:1253px;height:1px;background:#e1e1e1"></div>
<div style="left:20px;top:633.9599999999999px;width:1253px;height:1px;background:#e1e1e1"></div>
<div style="left:20px;top:650.13px;width:1253px;height:1px;background:#e1e1e1"></div>
<div style="left:20px;top:666.3000000000001px;width:1253px;height:1px;background:#e1e1e1"></div>
<div style="left:295.0px;top:181.7px;width:1px;height:474.3px;background:#e1e1e1"></div>
<div style="left:425.2px;top:181.7px;width:1px;height:474.3px;background:#e1e1e1"></div>
<div style="left:498.9px;top:181.7px;width:1px;height:474.3px;background:#e1e1e1"></div>
<div style="left:565.9px;top:181.7px;width:1px;height:474.3px;background:#e1e1e1"></div>
<div style="left:658.2px;top:181.7px;width:1px;height:474.3px;background:#e1e1e1"></div>
<div style="left:712.0px;top:181.7px;width:1px;height:474.3px;background:#e1e1e1"></div>
<div style="left:765.8px;top:181.7px;width:1px;height:474.3px;background:#e1e1e1"></div>
<div style="left:819.5999999999999px;top:181.7px;width:1px;height:474.3px;background:#e1e1e1"></div>
<div style="left:873.3999999999999px;top:181.7px;width:1px;height:474.3px;background:#e1e1e1"></div>
<div style="left:927.1999999999998px;top:181.7px;width:1px;height:474.3px;background:#e1e1e1"></div>
<div style="left:980.9999999999998px;top:181.7px;width:1px;height:474.3px;background:#e1e1e1"></div>
<div style="left:1034.7999999999997px;top:181.7px;width:1px;height:474.3px;background:#e1e1e1"></div>
<div style="left:1088.5999999999997px;top:181.7px;width:1px;height:474.3px;background:#e1e1e1"></div>
<div style="left:1142.3999999999996px;top:181.7px;width:1px;height:474.3px;background:#e1e1e1"></div>
<div style="left:1196.1999999999996px;top:181.7px;width:1px;height:474.3px;background:#e1e1e1"></div>
<div style="left:1249.9999999999995px;top:181.7px;width:1px;height:474.3px;background:#e1e1e1"></div>
<div style="left:1303.7999999999995px;top:181.7px;width:1px;height:474.3px;background:#e1e1e1"></div>
<div style="left:20px;top:246.38px;width:638.7px;height:16.17px;background:#ffff00"></div>
<div style="left:20px;top:262.55px;width:638.7px;height:16.17px;background:#c6e0b4"></div>
<div style="left:20px;top:278.72px;width:638.7px;height:16.17px;background:#d9e1f2"></div>
<div style="left:20px;top:294.89px;width:638.7px;height:16.17px;background:#d9e1f2"></div>
<div style="left:20px;top:311.06px;width:638.7px;height:16.17px;background:#c6e0b4"></div>
<div style="left:20px;top:327.23px;width:638.7px;height:16.17px;background:#ffff00"></div>
<div style="left:20px;top:343.4px;width:638.7px;height:16.17px;background:#ffff00"></div>
<div style="left:20px;top:359.57px;width:638.7px;height:16.17px;background:#ffff00"></div>
<div style="left:20px;top:375.74px;width:638.7px;height:16.17px;background:#ffff00"></div>
<div style="left:20px;top:391.91px;width:638.7px;height:16.17px;background:#ffff00"></div>
<div style="left:20px;top:408.08000000000004px;width:638.7px;height:16.17px;background:#ffff00"></div>
<div style="left:20px;top:424.25px;width:638.7px;height:16.17px;background:#d9e1f2"></div>
<div style="left:20px;top:440.42px;width:638.7px;height:16.17px;background:#d9e1f2"></div>
<div style="left:20px;top:456.59000000000003px;width:638.7px;height:16.17px;background:#d9e1f2"></div>
<div style="left:20px;top:472.76000000000005px;width:638.7px;height:16.17px;background:#d9e1f2"></div>
<div style="left:20px;top:488.93px;width:638.7px;height:16.17px;background:#c6e0b4"></div>
<div style="left:20px;top:505.1px;width:638.7px;height:16.17px;background:#d9e1f2"></div>
<div style="left:20px;top:521.27px;width:638.7px;height:16.17px;background:#d9e1f2"></div>
<div style="left:20px;top:537.44px;width:638.7px;height:16.17px;background:#d9e1f2"></div>
<div style="left:20px;top:553.61px;width:638.7px;height:16.17px;background:#c6e0b4"></div>
<div style="left:20px;top:569.78px;width:638.7px;height:16.17px;background:#d9e1f2"></div>
<div style="left:20px;top:585.95px;width:638.7px;height:16.17px;background:#d9e1f2"></div>
<div style="left:20px;top:602.1200000000001px;width:638.7px;height:16.17px;background:#d9e1f2"></div>
<div style="left:20px;top:618.29px;width:638.7px;height:16.17px;background:#c6e0b4"></div>
<div style="left:20px;top:634.46px;width:638.7px;height:16.17px;background:#ffff00"></div>
<div style="left:20px;top:650.6300000000001px;width:638.7px;height:16.17px;background:#ffff00"></div>
<div style="left:20px;top:181.2px;width:638.7px;height:1px;background:#333"></div>
<div style="left:20px;top:197.27px;width:638.7px;height:1.2px;background:#333"></div>
<div style="left:295.0px;top:181.7px;width:1px;height:16.170000000000016px;background:#333"></div>
<div style="left:425.2px;top:181.7px;width:1px;height:16.170000000000016px;background:#333"></div>
<div style="left:498.9px;top:181.7px;width:1px;height:16.170000000000016px;background:#333"></div>
<div style="left:565.9px;top:181.7px;width:1px;height:16.170000000000016px;background:#333"></div>
<div style="left:20px;top:245.88px;width:546.4px;height:1px;background:#333"></div>
<div style="left:566.4px;top:245.88px;width:92.30000000000007px;height:1px;background:#333"></div>
<div style="left:20px;top:262.05px;width:546.4px;height:1px;background:#333"></div>
<div style="left:566.4px;top:262.05px;width:92.30000000000007px;height:1px;background:#333"></div>
<div style="left:20px;top:278.22px;width:546.4px;height:1px;background:#333"></div>
<div style="left:566.4px;top:278.22px;width:92.30000000000007px;height:1px;background:#333"></div>
<div style="left:20px;top:294.39px;width:546.4px;height:1px;background:#333"></div>
<div style="left:566.4px;top:294.39px;width:92.30000000000007px;height:1px;background:#333"></div>
<div style="left:20px;top:310.56px;width:546.4px;height:1px;background:#333"></div>
<div style="left:566.4px;top:310.56px;width:92.30000000000007px;height:1px;background:#333"></div>
<div style="left:20px;top:326.73px;width:546.4px;height:1px;background:#333"></div>
<div style="left:566.4px;top:326.73px;width:92.30000000000007px;height:1px;background:#333"></div>
<div style="left:20px;top:342.9px;width:546.4px;height:1px;background:#333"></div>
<div style="left:566.4px;top:342.9px;width:92.30000000000007px;height:1px;background:rgba(60,60,0,.28)"></div>
<div style="left:20px;top:359.07px;width:546.4px;height:1px;background:#333"></div>
<div style="left:566.4px;top:359.07px;width:92.30000000000007px;height:1px;background:rgba(60,60,0,.28)"></div>
<div style="left:20px;top:375.24px;width:546.4px;height:1px;background:#333"></div>
<div style="left:566.4px;top:375.24px;width:92.30000000000007px;height:1px;background:rgba(60,60,0,.28)"></div>
<div style="left:20px;top:391.41px;width:546.4px;height:1px;background:#333"></div>
<div style="left:566.4px;top:391.41px;width:92.30000000000007px;height:1px;background:rgba(60,60,0,.28)"></div>
<div style="left:20px;top:407.58000000000004px;width:546.4px;height:1px;background:#333"></div>
<div style="left:566.4px;top:407.58000000000004px;width:92.30000000000007px;height:1px;background:rgba(60,60,0,.28)"></div>
<div style="left:20px;top:423.75px;width:546.4px;height:1px;background:#333"></div>
<div style="left:566.4px;top:423.75px;width:92.30000000000007px;height:1px;background:#333"></div>
<div style="left:20px;top:439.92px;width:546.4px;height:1px;background:#333"></div>
<div style="left:566.4px;top:439.92px;width:92.30000000000007px;height:1px;background:#333"></div>
<div style="left:20px;top:456.09000000000003px;width:546.4px;height:1px;background:#333"></div>
<div style="left:566.4px;top:456.09000000000003px;width:92.30000000000007px;height:1px;background:#333"></div>
<div style="left:20px;top:472.26000000000005px;width:546.4px;height:1px;background:#333"></div>
<div style="left:566.4px;top:472.26000000000005px;width:92.30000000000007px;height:1px;background:#333"></div>
<div style="left:20px;top:488.43px;width:546.4px;height:1px;background:#333"></div>
<div style="left:566.4px;top:488.43px;width:92.30000000000007px;height:1px;background:#333"></div>
<div style="left:20px;top:504.6px;width:546.4px;height:1px;background:#333"></div>
<div style="left:566.4px;top:504.6px;width:92.30000000000007px;height:1px;background:#333"></div>
<div style="left:20px;top:520.77px;width:546.4px;height:1px;background:#333"></div>
<div style="left:566.4px;top:520.77px;width:92.30000000000007px;height:1px;background:#333"></div>
<div style="left:20px;top:536.94px;width:546.4px;height:1px;background:#333"></div>
<div style="left:566.4px;top:536.94px;width:92.30000000000007px;height:1px;background:#333"></div>
<div style="left:20px;top:553.11px;width:546.4px;height:1px;background:#333"></div>
<div style="left:566.4px;top:553.11px;width:92.30000000000007px;height:1px;background:#333"></div>
<div style="left:20px;top:569.28px;width:546.4px;height:1px;background:#333"></div>
<div style="left:566.4px;top:569.28px;width:92.30000000000007px;height:1px;background:#333"></div>
<div style="left:20px;top:585.45px;width:546.4px;height:1px;background:#333"></div>
<div style="left:566.4px;top:585.45px;width:92.30000000000007px;height:1px;background:#333"></div>
<div style="left:20px;top:601.6200000000001px;width:546.4px;height:1px;background:#333"></div>
<div style="left:566.4px;top:601.6200000000001px;width:92.30000000000007px;height:1px;background:#333"></div>
<div style="left:20px;top:617.79px;width:546.4px;height:1px;background:#333"></div>
<div style="left:566.4px;top:617.79px;width:92.30000000000007px;height:1px;background:#333"></div>
<div style="left:20px;top:633.96px;width:546.4px;height:1px;background:#333"></div>
<div style="left:566.4px;top:633.96px;width:92.30000000000007px;height:1px;background:#333"></div>
<div style="left:20px;top:650.1300000000001px;width:546.4px;height:1px;background:#333"></div>
<div style="left:566.4px;top:650.1300000000001px;width:92.30000000000007px;height:1px;background:#333"></div>
<div style="left:19.5px;top:246.38px;width:1px;height:409.62px;background:#333"></div>
<div style="left:295.0px;top:246.38px;width:1px;height:409.62px;background:#333"></div>
<div style="left:425.2px;top:246.38px;width:1px;height:409.62px;background:#333"></div>
<div style="left:498.9px;top:246.38px;width:1px;height:409.62px;background:#333"></div>
<div style="left:565.9px;top:246.38px;width:1px;height:409.62px;background:#333"></div>
<div style="left:658.2px;top:246.38px;width:1px;height:409.62px;background:#333"></div>
<div class="t" style="left:135.54px;top:185px;font-size:10.9px;color:#000;font-weight:bold;transform:scaleX(0.9652);transform-origin:0 50%;">Keyword</div>
<div class="t" style="left:303.21px;top:185px;font-size:10.9px;color:#000;font-weight:bold;transform:scaleX(0.9603);transform-origin:0 50%;">Avg. Monthly Searches</div>
<div class="t" style="left:431.21px;top:185px;font-size:10.9px;color:#000;font-weight:bold;transform:scaleX(0.9859);transform-origin:0 50%;">Competition</div>
<div class="t" style="left:503.75px;top:185px;font-size:10.9px;color:#000;font-weight:bold;transform:scaleX(0.9924);transform-origin:0 50%;">Importance</div>
<div class="t" style="left:598.14px;top:185px;font-size:10.9px;color:#000;font-weight:bold;transform:scaleX(0.8974);transform-origin:0 50%;">Pages</div>
<div class="t" style="left:22.60px;top:250px;font-size:10.9px;color:#000;transform:scaleX(1.0176);transform-origin:0 50%;">buena vista co rafting</div>
<div class="t" style="left:404.63px;top:250px;font-size:10.9px;color:#000;transform:scaleX(1.0158);transform-origin:0 50%;">390</div>
<div class="t" style="left:475.26px;top:250px;font-size:10.9px;color:#000;transform:scaleX(1.0154);transform-origin:0 50%;">0.15</div>
<div class="t" style="left:557.64px;top:250px;font-size:10.9px;color:#000;transform:scaleX(1.0158);transform-origin:0 50%;">1</div>
<div class="t" style="left:569.00px;top:250px;font-size:10.9px;color:#000;transform:scaleX(1.0051);transform-origin:0 50%;">Homepage</div>
<div class="t" style="left:22.60px;top:266px;font-size:10.9px;color:#000;transform:scaleX(1.0184);transform-origin:0 50%;">adventure company buena vista</div>
<div class="t" style="left:410.78px;top:266px;font-size:10.9px;color:#000;transform:scaleX(1.0158);transform-origin:0 50%;">10</div>
<div class="t" style="left:475.26px;top:266px;font-size:10.9px;color:#000;transform:scaleX(1.0154);transform-origin:0 50%;">0.14</div>
<div class="t" style="left:557.64px;top:266px;font-size:10.9px;color:#000;transform:scaleX(1.0158);transform-origin:0 50%;">2</div>
<div class="t" style="left:22.60px;top:282px;font-size:10.9px;color:#000;transform:scaleX(1.0297);transform-origin:0 50%;">adventure company rafting colorado</div>
<div class="t" style="left:410.78px;top:282px;font-size:10.9px;color:#000;transform:scaleX(1.0158);transform-origin:0 50%;">10</div>
<div class="t" style="left:475.26px;top:282px;font-size:10.9px;color:#000;transform:scaleX(1.0154);transform-origin:0 50%;">0.07</div>
<div class="t" style="left:557.64px;top:282px;font-size:10.9px;color:#000;transform:scaleX(1.0158);transform-origin:0 50%;">3</div>
<div class="t" style="left:22.60px;top:298px;font-size:10.9px;color:#000;transform:scaleX(1.0368);transform-origin:0 50%;">adventure rafting colorado</div>
<div class="t" style="left:410.78px;top:298px;font-size:10.9px;color:#000;transform:scaleX(1.0158);transform-origin:0 50%;">90</div>
<div class="t" style="left:475.26px;top:298px;font-size:10.9px;color:#000;transform:scaleX(1.0154);transform-origin:0 50%;">0.05</div>
<div class="t" style="left:557.64px;top:298px;font-size:10.9px;color:#000;transform:scaleX(1.0158);transform-origin:0 50%;">3</div>
<div class="t" style="left:22.60px;top:314px;font-size:10.9px;color:#000;transform:scaleX(1.0018);transform-origin:0 50%;">arkansas river buena vista</div>
<div class="t" style="left:410.78px;top:314px;font-size:10.9px;color:#000;transform:scaleX(1.0158);transform-origin:0 50%;">30</div>
<div class="t" style="left:475.26px;top:314px;font-size:10.9px;color:#000;transform:scaleX(1.0154);transform-origin:0 50%;">0.04</div>
<div class="t" style="left:557.64px;top:314px;font-size:10.9px;color:#000;transform:scaleX(1.0158);transform-origin:0 50%;">2</div>
<div class="t" style="left:22.60px;top:331px;font-size:10.9px;color:#000;transform:scaleX(1.0138);transform-origin:0 50%;">arkansas river rafting</div>
<div class="t" style="left:398.47px;top:331px;font-size:10.9px;color:#000;transform:scaleX(1.0158);transform-origin:0 50%;">1300</div>
<div class="t" style="left:481.42px;top:331px;font-size:10.9px;color:#000;transform:scaleX(1.0152);transform-origin:0 50%;">0.1</div>
<div class="t" style="left:557.64px;top:331px;font-size:10.9px;color:#000;transform:scaleX(1.0158);transform-origin:0 50%;">1</div>
<div class="t" style="left:569.00px;top:331px;font-size:10.9px;color:#000;transform:scaleX(0.9728);transform-origin:0 50%;">Arkansas River</div>
<div class="t" style="left:22.60px;top:347px;font-size:10.9px;color:#000;transform:scaleX(1.0110);transform-origin:0 50%;">arkansas river rafting buena vista</div>
<div class="t" style="left:410.78px;top:347px;font-size:10.9px;color:#000;transform:scaleX(1.0158);transform-origin:0 50%;">50</div>
<div class="t" style="left:475.26px;top:347px;font-size:10.9px;color:#000;transform:scaleX(1.0154);transform-origin:0 50%;">0.03</div>
<div class="t" style="left:557.64px;top:347px;font-size:10.9px;color:#000;transform:scaleX(1.0158);transform-origin:0 50%;">1</div>
<div class="t" style="left:569.00px;top:347px;font-size:10.9px;color:#000;transform:scaleX(0.9728);transform-origin:0 50%;">Arkansas River</div>
<div class="t" style="left:22.60px;top:363px;font-size:10.9px;color:#000;transform:scaleX(1.0081);transform-origin:0 50%;">arkansas river rafting buena vista co</div>
<div class="t" style="left:410.78px;top:363px;font-size:10.9px;color:#000;transform:scaleX(1.0158);transform-origin:0 50%;">10</div>
<div class="t" style="left:490.64px;top:363px;font-size:10.9px;color:#000;transform:scaleX(1.0158);transform-origin:0 50%;">0</div>
<div class="t" style="left:557.64px;top:363px;font-size:10.9px;color:#000;transform:scaleX(1.0158);transform-origin:0 50%;">1</div>
<div class="t" style="left:569.00px;top:363px;font-size:10.9px;color:#000;transform:scaleX(0.9728);transform-origin:0 50%;">Arkansas River</div>
<div class="t" style="left:22.60px;top:379px;font-size:10.9px;color:#000;transform:scaleX(1.0142);transform-origin:0 50%;">arkansas river rafting colorado buena vista</div>
<div class="t" style="left:410.78px;top:379px;font-size:10.9px;color:#000;transform:scaleX(1.0158);transform-origin:0 50%;">30</div>
<div class="t" style="left:475.26px;top:379px;font-size:10.9px;color:#000;transform:scaleX(1.0154);transform-origin:0 50%;">0.07</div>
<div class="t" style="left:557.64px;top:379px;font-size:10.9px;color:#000;transform:scaleX(1.0158);transform-origin:0 50%;">1</div>
<div class="t" style="left:569.00px;top:379px;font-size:10.9px;color:#000;transform:scaleX(0.9728);transform-origin:0 50%;">Arkansas River</div>
<div class="t" style="left:22.60px;top:395px;font-size:10.9px;color:#000;transform:scaleX(1.0215);transform-origin:0 50%;">arkansas river rafting trips</div>
<div class="t" style="left:404.63px;top:395px;font-size:10.9px;color:#000;transform:scaleX(1.0631);transform-origin:0 50%;">110</div>
<div class="t" style="left:475.26px;top:395px;font-size:10.9px;color:#000;transform:scaleX(1.0154);transform-origin:0 50%;">0.02</div>
<div class="t" style="left:557.64px;top:395px;font-size:10.9px;color:#000;transform:scaleX(1.0158);transform-origin:0 50%;">1</div>
<div class="t" style="left:569.00px;top:395px;font-size:10.9px;color:#000;transform:scaleX(0.9728);transform-origin:0 50%;">Arkansas River</div>
<div class="t" style="left:22.60px;top:411px;font-size:10.9px;color:#000;transform:scaleX(1.0127);transform-origin:0 50%;">arkansas river trips</div>
<div class="t" style="left:410.78px;top:411px;font-size:10.9px;color:#000;transform:scaleX(1.0158);transform-origin:0 50%;">90</div>
<div class="t" style="left:475.26px;top:411px;font-size:10.9px;color:#000;transform:scaleX(1.0154);transform-origin:0 50%;">0.03</div>
<div class="t" style="left:557.64px;top:411px;font-size:10.9px;color:#000;transform:scaleX(1.0158);transform-origin:0 50%;">1</div>
<div class="t" style="left:569.00px;top:411px;font-size:10.9px;color:#000;transform:scaleX(0.9728);transform-origin:0 50%;">Arkansas River</div>
<div class="t" style="left:22.60px;top:428px;font-size:10.9px;color:#000;transform:scaleX(1.0388);transform-origin:0 50%;">best colorado river rafting trips</div>
<div class="t" style="left:410.78px;top:428px;font-size:10.9px;color:#000;transform:scaleX(1.0158);transform-origin:0 50%;">30</div>
<div class="t" style="left:475.26px;top:428px;font-size:10.9px;color:#000;transform:scaleX(1.0154);transform-origin:0 50%;">0.65</div>
<div class="t" style="left:557.64px;top:428px;font-size:10.9px;color:#000;transform:scaleX(1.0158);transform-origin:0 50%;">3</div>
<div class="t" style="left:22.60px;top:444px;font-size:10.9px;color:#000;transform:scaleX(1.0451);transform-origin:0 50%;">best colorado white water rafting trips</div>
<div class="t" style="left:410.78px;top:444px;font-size:10.9px;color:#000;transform:scaleX(1.0158);transform-origin:0 50%;">10</div>
<div class="t" style="left:475.26px;top:444px;font-size:10.9px;color:#000;transform:scaleX(1.0154);transform-origin:0 50%;">0.14</div>
<div class="t" style="left:557.64px;top:444px;font-size:10.9px;color:#000;transform:scaleX(1.0158);transform-origin:0 50%;">3</div>
<div class="t" style="left:22.60px;top:460px;font-size:10.9px;color:#000;transform:scaleX(1.0459);transform-origin:0 50%;">best colorado whitewater rafting</div>
<div class="t" style="left:410.78px;top:460px;font-size:10.9px;color:#000;transform:scaleX(1.0158);transform-origin:0 50%;">10</div>
<div class="t" style="left:490.64px;top:460px;font-size:10.9px;color:#000;transform:scaleX(1.0158);transform-origin:0 50%;">0</div>
<div class="t" style="left:557.64px;top:460px;font-size:10.9px;color:#000;transform:scaleX(1.0158);transform-origin:0 50%;">3</div>
<div class="t" style="left:22.60px;top:476px;font-size:10.9px;color:#000;transform:scaleX(1.0434);transform-origin:0 50%;">best family white water rafting colorado</div>
<div class="t" style="left:410.78px;top:476px;font-size:10.9px;color:#000;transform:scaleX(1.0158);transform-origin:0 50%;">20</div>
<div class="t" style="left:475.26px;top:476px;font-size:10.9px;color:#000;transform:scaleX(1.0154);transform-origin:0 50%;">0.32</div>
<div class="t" style="left:557.64px;top:476px;font-size:10.9px;color:#000;transform:scaleX(1.0158);transform-origin:0 50%;">3</div>
<div class="t" style="left:22.60px;top:492px;font-size:10.9px;color:#000;transform:scaleX(1.0414);transform-origin:0 50%;">best place to whitewater raft in colorado</div>
<div class="t" style="left:404.63px;top:492px;font-size:10.9px;color:#000;transform:scaleX(1.0631);transform-origin:0 50%;">110</div>
<div class="t" style="left:481.42px;top:492px;font-size:10.9px;color:#000;transform:scaleX(1.0152);transform-origin:0 50%;">0.2</div>
<div class="t" style="left:557.64px;top:492px;font-size:10.9px;color:#000;transform:scaleX(1.0158);transform-origin:0 50%;">2</div>
<div class="t" style="left:22.60px;top:508px;font-size:10.9px;color:#000;transform:scaleX(1.0236);transform-origin:0 50%;">best rafting companies in colorado</div>
<div class="t" style="left:410.78px;top:508px;font-size:10.9px;color:#000;transform:scaleX(1.0158);transform-origin:0 50%;">20</div>
<div class="t" style="left:475.26px;top:508px;font-size:10.9px;color:#000;transform:scaleX(1.0154);transform-origin:0 50%;">0.09</div>
<div class="t" style="left:557.64px;top:508px;font-size:10.9px;color:#000;transform:scaleX(1.0158);transform-origin:0 50%;">3</div>
<div class="t" style="left:22.60px;top:525px;font-size:10.9px;color:#000;transform:scaleX(1.0326);transform-origin:0 50%;">best rafting in colorado</div>
<div class="t" style="left:404.63px;top:525px;font-size:10.9px;color:#000;transform:scaleX(1.0158);transform-origin:0 50%;">480</div>
<div class="t" style="left:475.26px;top:525px;font-size:10.9px;color:#000;transform:scaleX(1.0154);transform-origin:0 50%;">0.07</div>
<div class="t" style="left:557.64px;top:525px;font-size:10.9px;color:#000;transform:scaleX(1.0158);transform-origin:0 50%;">3</div>
<div class="t" style="left:22.60px;top:541px;font-size:10.9px;color:#000;transform:scaleX(1.0365);transform-origin:0 50%;">best rafting trips in colorado</div>
<div class="t" style="left:410.78px;top:541px;font-size:10.9px;color:#000;transform:scaleX(1.0158);transform-origin:0 50%;">20</div>
<div class="t" style="left:475.26px;top:541px;font-size:10.9px;color:#000;transform:scaleX(1.0154);transform-origin:0 50%;">0.05</div>
<div class="t" style="left:557.64px;top:541px;font-size:10.9px;color:#000;transform:scaleX(1.0158);transform-origin:0 50%;">3</div>
<div class="t" style="left:22.60px;top:557px;font-size:10.9px;color:#000;transform:scaleX(1.0356);transform-origin:0 50%;">best river rafting in colorado</div>
<div class="t" style="left:404.63px;top:557px;font-size:10.9px;color:#000;transform:scaleX(1.0631);transform-origin:0 50%;">110</div>
<div class="t" style="left:481.42px;top:557px;font-size:10.9px;color:#000;transform:scaleX(1.0152);transform-origin:0 50%;">0.4</div>
<div class="t" style="left:557.64px;top:557px;font-size:10.9px;color:#000;transform:scaleX(1.0158);transform-origin:0 50%;">2</div>
<div class="t" style="left:22.60px;top:573px;font-size:10.9px;color:#000;transform:scaleX(1.0497);transform-origin:0 50%;">best river to whitewater raft in colorado</div>
<div class="t" style="left:410.78px;top:573px;font-size:10.9px;color:#000;transform:scaleX(1.0158);transform-origin:0 50%;">10</div>
<div class="t" style="left:475.26px;top:573px;font-size:10.9px;color:#000;transform:scaleX(1.0154);transform-origin:0 50%;">0.54</div>
<div class="t" style="left:557.64px;top:573px;font-size:10.9px;color:#000;transform:scaleX(1.0158);transform-origin:0 50%;">3</div>
<div class="t" style="left:22.60px;top:589px;font-size:10.9px;color:#000;transform:scaleX(1.0417);transform-origin:0 50%;">best white water rafting in co</div>
<div class="t" style="left:410.78px;top:589px;font-size:10.9px;color:#000;transform:scaleX(1.0158);transform-origin:0 50%;">20</div>
<div class="t" style="left:475.26px;top:589px;font-size:10.9px;color:#000;transform:scaleX(1.0154);transform-origin:0 50%;">0.24</div>
<div class="t" style="left:557.64px;top:589px;font-size:10.9px;color:#000;transform:scaleX(1.0158);transform-origin:0 50%;">3</div>
<div class="t" style="left:22.60px;top:605px;font-size:10.9px;color:#000;transform:scaleX(1.0414);transform-origin:0 50%;">best white water rafting in colorado for families</div>
<div class="t" style="left:410.78px;top:605px;font-size:10.9px;color:#000;transform:scaleX(1.0158);transform-origin:0 50%;">70</div>
<div class="t" style="left:475.26px;top:605px;font-size:10.9px;color:#000;transform:scaleX(1.0154);transform-origin:0 50%;">0.14</div>
<div class="t" style="left:557.64px;top:605px;font-size:10.9px;color:#000;transform:scaleX(1.0158);transform-origin:0 50%;">3</div>
<div class="t" style="left:22.60px;top:622px;font-size:10.9px;color:#000;transform:scaleX(1.0457);transform-origin:0 50%;">brown river colorado</div>
<div class="t" style="left:410.78px;top:622px;font-size:10.9px;color:#000;transform:scaleX(1.0158);transform-origin:0 50%;">90</div>
<div class="t" style="left:490.64px;top:622px;font-size:10.9px;color:#000;transform:scaleX(1.0158);transform-origin:0 50%;">0</div>
<div class="t" style="left:557.64px;top:622px;font-size:10.9px;color:#000;transform:scaleX(1.0158);transform-origin:0 50%;">2</div>
<div class="t" style="left:22.60px;top:638px;font-size:10.9px;color:#000;transform:scaleX(1.0457);transform-origin:0 50%;">brown river rafting colorado</div>
<div class="t" style="left:410.78px;top:638px;font-size:10.9px;color:#000;transform:scaleX(1.0158);transform-origin:0 50%;">20</div>
<div class="t" style="left:475.26px;top:638px;font-size:10.9px;color:#000;transform:scaleX(1.0154);transform-origin:0 50%;">0.43</div>
<div class="t" style="left:557.64px;top:638px;font-size:10.9px;color:#000;transform:scaleX(1.0158);transform-origin:0 50%;">1</div>
<div class="t" style="left:569.00px;top:638px;font-size:10.9px;color:#000;transform:scaleX(0.9901);transform-origin:0 50%;">Browns Canyon</div>
<div style="left:20px;top:650.6300000000001px;width:300px;height:5.169999999999845px;overflow:hidden"><div class="t" style="left:2.6px;top:0;height:16.17px;line-height:16.57px;font-size:10.9px;color:#111">brown&#39;s canyon rafting</div></div>
<div style="left:565.4px;top:180.7px;width:93.80000000000007px;height:17.67px;border:1.500px solid #217346"></div>
<div style="left:656.2px;top:195.37px;width:5px;height:5px;background:#217346;border:1px solid #fff"></div>
<div style="left:1273px;top:166px;width:18px;height:490px;background:#e6e6e6"></div>
<div style="left:1276.500px;top:167px;width:12px;height:13px;background:#fff;border:1px solid #cfcfcf"></div>
<svg style="left:1279px;top:171px" width="7" height="5" viewBox="0 0 7 5"><path d="M0.500 4.500h6l-3-4z" fill="#666"/></svg>
<div style="left:1276.500px;top:180.500px;width:12px;height:461px;background:#dbdbdb"></div>
<div style="left:1276.500px;top:180.500px;width:12px;height:113.500px;background:#fff;border:1px solid #c8c8c8"></div>
<div style="left:1273px;top:181px;width:1px;height:475px;background:#c4c4c4"></div>
<div style="left:1276.500px;top:641px;width:12px;height:14px;background:#fff;border:1px solid #cfcfcf"></div>
<svg style="left:1279px;top:646px" width="7" height="5" viewBox="0 0 7 5"><path d="M0.500 0.500h6l-3 4z" fill="#666"/></svg>
<div style="left:-6px;top:655.800px;width:1297px;height:20.200px;background:#e6e6e6;border-top:1px solid #c6c6c6"></div>
<div style="left:67.500px;top:655.800px;width:160.500px;height:17px;background:#fff;border-bottom:2px solid #217346"></div>
<div class="t" style="left:76.3px;top:658px;font-size:10.6px;color:#217346;font-weight:bold;transform:scaleX(1.0561);transform-origin:0 50%;">Keyword-Research-Rafting</div>
<svg style="left:15px;top:661px" width="30" height="8" viewBox="0 0 30 8"><path d="M5 0.500L1.500 4 5 7.500z" fill="#cfcfcf"/><path d="M22 0.500L25.500 4 22 7.500z" fill="#cfcfcf"/></svg>
<svg style="left:250px;top:659px" width="14" height="14" viewBox="0 0 14 14"><circle cx="7" cy="7" r="6" fill="none" stroke="#777" stroke-width="1"/><path d="M7 3.500v7M3.500 7h7" stroke="#777" stroke-width="1.200"/></svg>
<div style="left:772px;top:660px;width:1.500px;height:1.500px;background:#999"></div>
<div style="left:772px;top:664px;width:1.500px;height:1.500px;background:#999"></div>
<div style="left:772px;top:668px;width:1.500px;height:1.500px;background:#999"></div>
<div style="left:784.500px;top:658.500px;width:12px;height:13px;background:#fff;border:1px solid #cfcfcf"></div>
<svg style="left:788.500px;top:661.500px" width="5" height="7" viewBox="0 0 5 7"><path d="M4.500 0.500v6l-4-3z" fill="#555"/></svg>
<div style="left:797px;top:658.500px;width:435px;height:13px;background:#fff;border:1px solid #cfcfcf"></div>
<div style="left:1262px;top:658px;width:13px;height:14px;background:#fff;border:1px solid #cfcfcf"></div>
<svg style="left:1266px;top:661.500px" width="5" height="7" viewBox="0 0 5 7"><path d="M0.500 0.500v6l4-3z" fill="#555"/></svg>
<div style="left:-6px;top:676px;width:1297px;height:18px;background:#f3f3f3;border-top:1px solid #dadada"></div>
<div class="t" style="left:2.8px;top:680px;font-size:9.6px;color:#444;transform:scaleX(0.8649);transform-origin:0 50%;">Ready</div>
<div style="left:1065px;top:676px;width:28px;height:18px;background:#c9c9c9"></div>
<svg style="left:1072px;top:678.500px" width="75" height="14" viewBox="0 0 75 14"><g fill="none" stroke="#666" stroke-width="1">
<rect x="1.500" y="1.500" width="10" height="10"/><path d="M1.500 5h10M1.500 8.300h10M5 1.500v10M8.300 1.500v10"/>
<rect x="29.500" y="1.500" width="10" height="10"/><rect x="32" y="4" width="5" height="5"/>
<rect x="57.500" y="1.500" width="10" height="10"/><path d="M61 1.500v6M64.500 1.500v6M61 7.500h3.500"/></g></svg>
<div style="left:1153px;top:684.500px;width:6px;height:1.400px;background:#555"></div>
<div style="left:1163px;top:685px;width:84px;height:1px;background:#b5b5b5"></div>
<div style="left:1202.500px;top:680px;width:3.500px;height:10px;background:#666"></div>
<div style="left:1249.500px;top:684.500px;width:6.500px;height:1.400px;background:#555"></div><div style="left:1252px;top:682px;width:1.400px;height:6.500px;background:#555"></div>
<div class="t" style="left:1264.6px;top:682px;font-size:9.2px;color:#444;transform:scaleX(0.8670);transform-origin:0 50%;">100%</div>
<div style="left:209px;top:71.500px;width:282.800px;height:41px;background:#4472c4;border:1px solid #3a62ad"></div>
<div class="t" style="left:238.75px;top:82px;font-size:21.75px;color:#fff;-webkit-text-stroke:0.35px #fff;transform:scaleX(0.9988);transform-origin:0 50%;">Avg. Monthly Searches</div>
<div style="left:529.200px;top:71.500px;width:283.300px;height:41px;background:#4472c4;border:1px solid #3a62ad"></div>
<div class="t" style="left:579.4px;top:82px;font-size:21.75px;color:#fff;-webkit-text-stroke:0.35px #fff;transform:scaleX(1.0317);transform-origin:0 50%;">Competition Value</div>
<svg style="left:0;top:0" width="1291" height="727" viewBox="0 0 1291 727">
<path d="M355.200 125.200H366.700V167.800H372.800L361 178.900L349.300 167.800H355.200z" fill="#4472c4"/>
<path d="M519 135.600L526.500 143.300L495.300 172.400L499.600 176.700H483V160.500L487.400 164.800z" fill="#4472c4"/>
<rect x="492" y="218" width="87.500" height="450.500" fill="none" stroke="#2f528f" stroke-width="2.700"/>
</svg>
<div style="left:-6px;top:694px;width:1297px;height:40px;background:#0b0c10"></div>
<!-- stars -->
<svg style="left:0;top:694px" width="1291" height="33" viewBox="0 0 1291 33"><g fill="#3a3d44">
<circle cx="33" cy="12" r=".7"/><circle cx="78" cy="25" r=".6"/><circle cx="122" cy="6" r=".6"/><circle cx="139" cy="8" r=".6"/><circle cx="208" cy="27" r=".6"/><circle cx="245" cy="5" r=".6"/><circle cx="291" cy="29" r=".6"/><circle cx="332" cy="9" r=".6"/><circle cx="371" cy="24" r=".6"/><circle cx="457" cy="17" r=".7"/><circle cx="498" cy="21" r=".6"/><circle cx="539" cy="11" r=".6"/><circle cx="577" cy="27" r=".6"/><circle cx="655" cy="13" r=".6"/><circle cx="700" cy="24" r=".6"/><circle cx="745" cy="8" r=".6"/><circle cx="790" cy="19" r=".7"/><circle cx="838" cy="28" r=".6"/><circle cx="880" cy="10" r=".6"/><circle cx="925" cy="22" r=".6"/><circle cx="972" cy="7" r=".6"/><circle cx="1010" cy="26" r=".6"/><circle cx="1052" cy="14" r=".7"/><circle cx="1076" cy="8" r=".6"/></g>
<path d="M640 33L720 0" stroke="#1b1a12" stroke-width="3" opacity=".7"/></svg>
<!-- windows -->
<svg style="left:11px;top:703.500px" width="15" height="15" viewBox="0 0 15 15"><path d="M0.500 2.300l5.800-.9v5.300H0.500zM7.200 1.300l7.300-1.100v6.500H7.200zM0.500 7.600h5.800v5.300l-5.800-.9zM7.200 7.600h7.300v6.500l-7.300-1.100z" fill="#fff"/></svg>
<!-- task view -->
<svg style="left:50px;top:704.500px" width="18" height="13" viewBox="0 0 18 13"><g fill="none" stroke="#fff" stroke-width="1.100"><rect x="3.500" y="1" width="11" height="11"/><path d="M1.500 3H.6v7h.9M16.500 3h.9v7h-.9"/></g></svg>
<!-- edge -->
<svg style="left:93.500px;top:702.500px" width="17" height="17" viewBox="0 0 17 17"><g fill="none" stroke="#1e84e0"><path d="M4 9.200h10.800" stroke-width="3"/><path d="M14.300 9.600C14.600 4.800 12 2.200 8.600 2.200 5 2.200 2.300 5 2.300 8.800c0 3.800 2.700 6.300 6.500 6.300 2 0 3.800-.5 5.300-1.500" stroke-width="3.200"/></g><path d="M.8 8C1.500 3.500 4.500 1 8 .7 5 1.500 3.300 4.500 3.200 7z" fill="#1e84e0"/></svg>
<!-- firefox -->
<svg style="left:133.500px;top:701.500px" width="20" height="19" viewBox="0 0 20 19"><defs><radialGradient id="ffg" cx=".55" cy=".35" r=".75"><stop offset="0" stop-color="#ffd43a"/><stop offset=".55" stop-color="#ff8a16"/><stop offset="1" stop-color="#e31587"/></radialGradient></defs><circle cx="10" cy="10" r="8.800" fill="url(#ffg)"/><path d="M6 2l1.500 3L5 6zM13 .8l.5 3.500-2.500-1z" fill="#ff9a1a"/><circle cx="10.800" cy="9.200" r="4.200" fill="#4a2fa8"/><path d="M7 8.500c1-1.800 3-2.500 5-1.800-1 .3-1.500 1-1.300 2 .3 1.300 2 1.500 3 .8-.3 2.200-2.300 3.500-4.300 3.200C7.500 12.300 6.300 10.300 7 8.500z" fill="#ff8a16"/></svg>
<!-- chrome -->
<svg style="left:175.500px;top:701.500px" width="20" height="20" viewBox="0 0 20 20"><circle cx="10" cy="10" r="9.300" fill="#db4437"/><path d="M10 10L1.900 5.400A9.300 9.300 0 0 0 10 19.300l4.300-7z" fill="#0f9d58"/><path d="M10 10l4.300 2.300-4.300 7A9.300 9.300 0 0 0 18.400 6H10z" fill="#ffcd40"/><circle cx="10" cy="10" r="4.300" fill="#fff"/><circle cx="10" cy="10" r="3.300" fill="#4285f4"/></svg>
<!-- safari -->
<svg style="left:217.500px;top:702px" width="19" height="19" viewBox="0 0 19 19"><circle cx="9.500" cy="9.500" r="8.800" fill="#c9ccd1"/><circle cx="9.500" cy="9.500" r="7" fill="#2b7bd6"/><circle cx="9.500" cy="9.500" r="7" fill="none" stroke="#8fb8e8" stroke-width=".8"/><path d="M13.500 5.500l-2.800 5.200-2-2z" fill="#e9463a"/><path d="M5.500 13.500l2.800-5.200 2 2z" fill="#f2f2f2"/></svg>
<!-- explorer -->
<svg style="left:258.500px;top:702.500px" width="20" height="18" viewBox="0 0 20 18"><path d="M.5 1.500h6.500l1.500 2h10.500v13H.5z" fill="#f5c64a"/><path d="M.5 6h18.500v10.500H.5z" fill="#fbe08a"/><path d="M4 9.500h11.500v7H4z" fill="#3aa0e8"/><path d="M6.500 12.500h6.500v4H6.500z" fill="#fbe08a"/></svg>
<!-- snipping -->
<svg style="left:299.500px;top:701.500px" width="21" height="20" viewBox="0 0 21 20"><ellipse cx="10" cy="7.500" rx="8.300" ry="6" fill="#f1f1f1" transform="rotate(-18 10 7.500)"/><path d="M3 11.500c4 2 10 .5 14-4.500" fill="none" stroke="#c8372c" stroke-width="2"/><path d="M9 6l6 9M14.500 5l-3 10" stroke="#bfc6cc" stroke-width="1.300"/><circle cx="16" cy="16.500" r="1.800" fill="none" stroke="#2c8fe0" stroke-width="1.300"/><circle cx="11" cy="17" r="1.800" fill="none" stroke="#2c8fe0" stroke-width="1.300"/></svg>
<!-- sticky -->
<svg style="left:344px;top:703.500px" width="17" height="15" viewBox="0 0 17 15"><path d="M.3 0h16v14.500H.3z" fill="#fff"/><path d="M16.300 7.500v7h-7.500z" fill="#0b0c10"/></svg>
<!-- outlook -->
<svg style="left:384.500px;top:701.500px" width="19" height="19" viewBox="0 0 19 19"><path d="M9 4.500h9.500v10H9z" fill="#fff"/><path d="M9 4.500l4.800 4 4.700-4v10H9z" fill="none" stroke="#1168b8" stroke-width="1"/><path d="M9.500 5h8.500l-4.200 3.600z" fill="#1e7fd8"/><path d="M.5 2.500l10-2v18l-10-2z" fill="#0f6cbf"/><ellipse cx="5.500" cy="9.500" rx="2.500" ry="3.300" fill="none" stroke="#fff" stroke-width="1.500"/></svg>
<!-- itunes -->
<svg style="left:426.500px;top:701.500px" width="19" height="19" viewBox="0 0 19 19"><defs><linearGradient id="itg" x1="0" y1="0" x2="1" y2="1"><stop offset="0" stop-color="#f45bb0"/><stop offset=".5" stop-color="#c86af0"/><stop offset="1" stop-color="#5db8f5"/></linearGradient></defs><circle cx="9.500" cy="9.500" r="8.800" fill="url(#itg)"/><circle cx="9.500" cy="9.500" r="6.800" fill="#fff"/><path d="M8 5.500l4.800-1v7.200a1.500 1.300 0 1 1-1-1.200V6.800l-2.800.6v5.300a1.500 1.300 0 1 1-1-1.200z" fill="#e85aa8"/></svg>
<!-- word -->
<svg style="left:468px;top:701.500px" width="19" height="19" viewBox="0 0 19 19"><path d="M9 3h9.500v13H9z" fill="#fff" stroke="#2b579a" stroke-width=".8"/><path d="M11.500 6h5.500M11.500 8.300h5.500M11.500 10.600h5.500M11.500 12.900h5.500" stroke="#2b579a" stroke-width="1"/><path d="M.3 2.500l10.500-2v18l-10.500-2z" fill="#2b579a"/><path d="M2.500 6.500l1.300 6 1.500-5.500 1.500 5.500 1.300-6" fill="none" stroke="#fff" stroke-width="1.200"/></svg>
<!-- powerpoint -->
<svg style="left:510px;top:701.500px" width="19" height="19" viewBox="0 0 19 19"><path d="M9 3h9.500v13H9z" fill="#fff" stroke="#d24726" stroke-width=".8"/><circle cx="13.800" cy="7.500" r="2.600" fill="#d24726"/><path d="M11.500 11.800h5.500M11.500 13.800h5.500" stroke="#d24726" stroke-width="1"/><path d="M.3 2.500l10.500-2v18l-10.500-2z" fill="#d24726"/><path d="M4 13V6h2.200a2.100 2.100 0 0 1 0 4.200H4" fill="none" stroke="#fff" stroke-width="1.400"/></svg>
<!-- photoshop -->
<div style="left:551px;top:701.500px;width:19px;height:18px;background:#14146a;border:1.200px solid #8d96ff"></div>
<div class="t" style="left:554px;top:0;font-size:10.500px;font-weight:bold;color:#9fb4ff;top:706px;transform:scaleX(1.0511);transform-origin:0 50%;">Ps</div>
<!-- excel active -->
<div style="left:582.200px;top:694px;width:40.800px;height:33px;background:#3b3d40"></div>
<svg style="left:593.500px;top:701.500px" width="19" height="19" viewBox="0 0 19 19"><path d="M9 3h9.500v13H9z" fill="#fff" stroke="#217346" stroke-width=".8"/><path d="M11.500 5.500h2.500v2h-2.500zM15 5.500h2.500v2H15zM11.500 8.500h2.500v2h-2.500zM15 8.500h2.500v2H15zM11.500 11.500h2.500v2h-2.500zM15 11.500h2.500v2H15z" fill="#217346"/><path d="M.3 2.500l10.500-2v18l-10.500-2z" fill="#217346"/><path d="M3 6l4.500 7M7.500 6L3 13" stroke="#fff" stroke-width="1.500"/></svg>
<!-- running underlines -->
<svg style="left:0;top:725.500px" width="1291" height="2" viewBox="0 0 1291 2"><g fill="#e9e6a8"><rect x="168" y="0" width="34" height="2"/><rect x="254.500" y="0" width="30.500" height="2"/><rect x="294" y="0" width="33" height="2"/><rect x="335" y="0" width="34.500" height="2"/><rect x="377" y="0" width="34" height="2"/><rect x="419" y="0" width="33" height="2"/><rect x="460.500" y="0" width="26" height="2"/><rect x="502" y="0" width="34" height="2"/><rect x="544" y="0" width="34.500" height="2"/><rect x="582" y="0" width="41" height="2"/></g><rect x="486.500" y="0" width="8" height="2" fill="#8a8a80"/></svg>
<!-- tray -->
<svg style="left:1093px;top:706.500px" width="12" height="8" viewBox="0 0 12 8"><path d="M1 7l5-5.500L11 7" fill="none" stroke="#fff" stroke-width="1.200"/></svg>
<svg style="left:1111.500px;top:705.500px" width="15" height="10" viewBox="0 0 15 10"><path d="M3.500 9.500a3 3 0 0 1-.3-6 4 4 0 0 1 7.300-.5 3.300 3.300 0 0 1 1.500 6.500z" fill="#fff"/></svg>
<svg style="left:1132px;top:705.500px" width="15" height="10" viewBox="0 0 15 10"><rect x="2.500" y="2" width="12" height="7" rx=".6" fill="#fff"/><path d="M1 .5v4M.3 1.500h1.600M0 5h2.500v1.500H0z" stroke="#fff" stroke-width=".8" fill="#fff"/><path d="M4.500 3.500h8v4h-8z" fill="#bdbdbd"/></svg>
<svg style="left:1155px;top:704px" width="12" height="12" viewBox="0 0 12 12"><g fill="none" stroke="#d0d0d0" stroke-width="1"><path d="M1 11A9.500 9.500 0 0 1 10.500 1.500"/><path d="M3.500 11A7 7 0 0 1 10.500 4"/><path d="M6 11A4.500 4.500 0 0 1 10.500 6.500"/></g><circle cx="9.500" cy="10" r="1.200" fill="#fff"/></svg>
<svg style="left:1172.500px;top:704px" width="15" height="13" viewBox="0 0 15 13"><path d="M.8 4.500h2.500L6.300 1.800v9.400L3.300 8.500H.8z" fill="none" stroke="#fff" stroke-width="1"/><g fill="none" stroke="#fff" stroke-width="1"><path d="M8.300 4.500a3 3 0 0 1 0 4"/><path d="M10.300 3a5.500 5.500 0 0 1 0 7" opacity=".8"/><path d="M12.300 1.500a8 8 0 0 1 0 10" opacity=".6"/></g></svg>
<div class="t" style="left:1201.200px;top:0;font-size:10px;color:#fff;top:699px;transform:scaleX(0.9264);transform-origin:0 50%;">7:30 PM</div>
<div class="t" style="left:1195.200px;top:0;font-size:10px;color:#fff;top:715px;transform:scaleX(1.0340);transform-origin:0 50%;">4/16/2018</div>
<svg style="left:1256.500px;top:704px" width="22" height="21" viewBox="0 0 22 21"><path d="M.8.800h12.700v10.500H4.500L.8 13.500z" fill="#fff"/><path d="M3 3.500h8.300M3 6h8.300M3 8.500h8.300" stroke="#0b0c10" stroke-width=".9"/><circle cx="13.300" cy="13.800" r="5.800" fill="#2d2f33" stroke="#55585e" stroke-width=".6"/></svg>
<div class="t" style="left:1264.800px;top:0;font-size:8.600px;font-weight:bold;color:#fff;top:714px;transform:scaleX(1.0454);transform-origin:0 50%;">27</div>
<div style="left:1287px;top:694px;width:1px;height:33px;background:#4a4d52"></div>

</div></body></html>
